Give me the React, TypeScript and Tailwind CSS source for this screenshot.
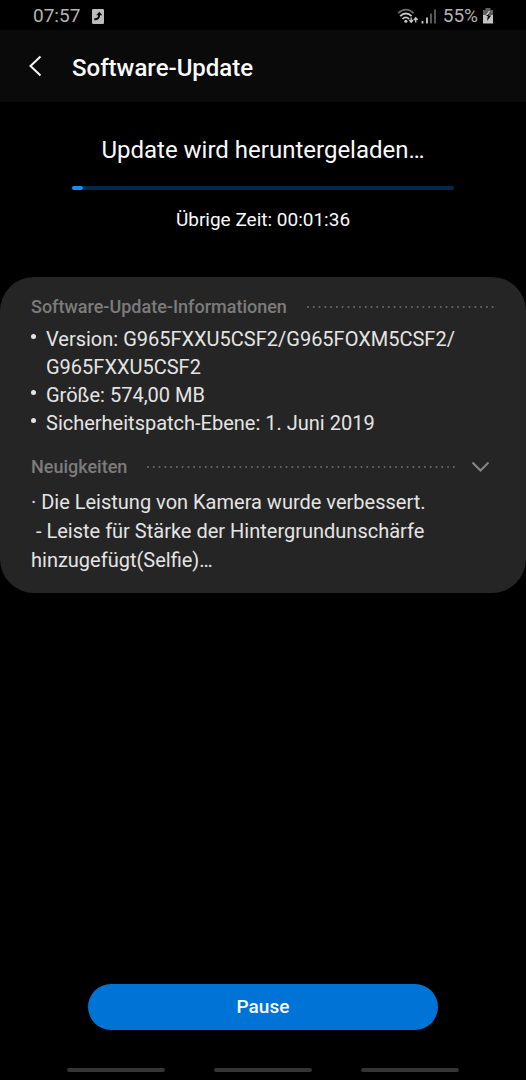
import type { ReactNode } from "react";

function DottedRule() {
  return (
    <svg className="h-1 min-w-0 flex-1" aria-hidden="true">
      <line x1="1" y1="2" x2="100%" y2="2" stroke="#6a6a6a" strokeWidth="2" strokeLinecap="round" strokeDasharray="0 5.77" />
    </svg>
  );
}

function StatusBar() {
  return (
    <div className="flex h-[30px] items-center justify-between pt-[2px] pr-8 pl-[33px] text-[19px] leading-6 text-[#b4b4b4]">
      <div className="flex items-center gap-3">
        <time>07:57</time>
        <svg width="12" height="15" viewBox="0 0 12 15" aria-hidden="true">
          <rect width="12" height="15" rx="1.2" fill="#bcbcbc" />
          <path d="M2.300 10.300c3.200.2 4.900-1.400 4.900-4.600" fill="none" stroke="#0a0a0a" strokeWidth="2" />
          <path d="M4.200 6.200 7.300 2.700l3 3.500z" fill="#0a0a0a" />
        </svg>
      </div>
      <div className="flex items-center">
        <svg width="40" height="16" viewBox="0 0 40 16" fill="none" aria-hidden="true">
          <path d="M1.200 5.200c4.500-4.800 10.900-4.800 15.400 0" stroke="#6a6a6a" strokeWidth="1.800" />
          <path d="M3.200 8.200c3.400-3.600 8-3.600 11.400 0" stroke="#c8c8c8" strokeWidth="1.800" />
          <path d="M5.500 11c2-2.100 4.400-2.100 6.600 0" stroke="#c8c8c8" strokeWidth="1.800" />
          <circle cx="8.900" cy="13.300" r="1.500" fill="#c8c8c8" />
          <path d="M14.200 9.500V14M12.300 12l1.900 2.300 1.900-2.300M18.700 14.500V10M16.800 12l1.900-2.300 1.900 2.300" stroke="#c8c8c8" strokeWidth="1.300" />
          <path d="M25.500 13v2.500M30 9.500v6" stroke="#c8c8c8" strokeWidth="1.800" />
          <path d="M34 5.500v10M38 1.500v14" stroke="#606060" strokeWidth="1.800" />
        </svg>
        <span className="pl-[6px]">55%</span>
        <svg className="ml-1" width="12" height="16" viewBox="0 0 12 16" aria-hidden="true">
          <path d="M3.500 0h5v2H11v5H1V2h2.500z" fill="#606060" />
          <path d="M1 7h10v8.500H1z" fill="#c4c4c4" />
          <path d="M7.500 3 4 7.500h1z" fill="#d0d0d0" stroke="#d0d0d0" />
          <path d="M3.500 8h2.300L5 13l4.300-5.500H6.500L7 6z" fill="#0a0a0a" />
        </svg>
      </div>
    </div>
  );
}

function InfoItem({ children }: { children: ReactNode }) {
  return (
    <li className="flex gap-[10px]">
      <span className="mt-[9px] size-[5px] shrink-0 rounded-full bg-[#e4e4e4]" />
      <span className="min-w-0">{children}</span>
    </li>
  );
}

export default function App() {
  return (
    <div className="flex min-h-screen flex-col bg-black font-['Roboto',sans-serif] text-[#fafafa]">
      <StatusBar />
      <header className="flex h-[72px] items-center bg-[#0a0a0a] pl-7">
        <button type="button" aria-label="Zurück" className="flex w-11 items-center">
          <svg width="14" height="22" viewBox="0 0 14 22" fill="none" stroke="#f5f5f5" strokeWidth="2" aria-hidden="true">
            <path d="M12.500 1.500 2.500 11l10 9.500" />
          </svg>
        </button>
        <h1 className="pt-1 text-[24px] leading-8 font-medium">Software-Update</h1>
      </header>

      <main className="flex flex-1 flex-col">
        <section className="flex flex-col items-center px-[72px] pt-8">
          <h2 className="text-[24px] leading-8 whitespace-nowrap">Update wird heruntergeladen…</h2>
          <div role="progressbar" aria-label="Download" aria-valuenow={3} aria-valuemin={0} aria-valuemax={100} className="mt-5 h-1 w-full rounded-full bg-[#03274a]">
            <div className="h-full w-[3%] rounded-full bg-[#1a8cf0]" />
          </div>
          <p className="mt-[18px] text-[19px] leading-6">Übrige Zeit: 00:01:36</p>
        </section>

        <section className="mt-[45px] rounded-[34px] bg-[#252525] px-[31px] pt-4 pb-[18px] text-[20px] leading-[29px] text-[#e4e4e4]">
          <div className="flex items-center gap-5">
            <h3 className="text-[18px] leading-7 font-medium text-[#7c7c7c]">Software-Update-Informationen</h3>
            <DottedRule />
          </div>
          <ul className="mt-1 leading-7">
            <InfoItem>Version: G965FXXU5CSF2/<wbr />G965FOXM5CSF2/<wbr />G965FXXU5CSF2</InfoItem>
            <InfoItem>Größe: 574,00 MB</InfoItem>
            <InfoItem>Sicherheitspatch-Ebene: 1. Juni 2019</InfoItem>
          </ul>
          <div className="mt-4 flex items-center">
            <h3 className="pr-5 text-[18px] leading-7 font-medium text-[#7c7c7c]">Neuigkeiten</h3>
            <DottedRule />
            <button type="button" aria-label="Neuigkeiten anzeigen" className="mr-[5px] ml-[14px]">
              <svg width="19" height="12" viewBox="0 0 19 12" fill="none" stroke="#858585" strokeWidth="2" aria-hidden="true">
                <path d="m1.500 1.500 8 8 8-8" />
              </svg>
            </button>
          </div>
          <p className="mt-[7px] whitespace-pre-wrap">{"· Die Leistung von Kamera wurde verbessert.\n - Leiste für Stärke der Hintergrundunschärfe hinzugefügt(Selfie)…"}</p>
        </section>

        <div className="mt-auto px-[88px] pt-8">
          <button type="button" className="h-[46px] w-full rounded-full bg-[#0074d6] text-[19px] font-medium">Pause</button>
        </div>
      </main>

      <nav className="flex justify-center gap-[49px] pt-[38px] pb-2" aria-label="Navigation">
        <button type="button" aria-label="Letzte Apps" className="h-1 w-[98px] rounded-full bg-[#353535]" />
        <button type="button" aria-label="Startseite" className="h-1 w-[98px] rounded-full bg-[#353535]" />
        <button type="button" aria-label="Zurück" className="h-1 w-[98px] rounded-full bg-[#353535]" />
      </nav>
    </div>
  );
}
